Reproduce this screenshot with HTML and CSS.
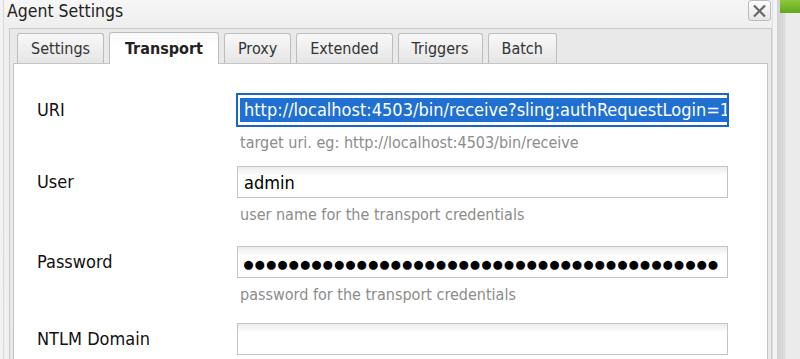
FILE: index.html
```html
<!DOCTYPE html>
<html lang="en">
<head>
    <meta charset="UTF-8">
    <title>Agent Settings</title>
    <link rel="stylesheet" href="styles.css">
</head>
<body>
    <div class="page">
        <div class="window">
            <div class="titlebar">
                <span class="title">Agent Settings</span>
                <div class="close">
                    <svg width="15" height="14" viewBox="0 0 15 14">
                        <path d="M2 1.5 L13 12.5 M13 1.5 L2 12.5" stroke="#666" stroke-width="2.2" fill="none"/>
                    </svg>
                </div>
            </div>
            <div class="panel">
                <div class="tabs">
                    <div class="tab">Settings</div>
                    <div class="tab active">Transport</div>
                    <div class="tab">Proxy</div>
                    <div class="tab">Extended</div>
                    <div class="tab">Triggers</div>
                    <div class="tab">Batch</div>
                </div>
                <div class="body">
                    <div class="row row-uri">
                        <div class="label">URI</div>
                        <div class="control">
                            <div class="field focus"><span class="sel">http://localhost:4503/bin/receive?sling:authRequestLogin=1</span></div>
                            <div class="hint">target uri. eg: http://localhost:4503/bin/receive</div>
                        </div>
                    </div>
                    <div class="row row-user">
                        <div class="label">User</div>
                        <div class="control">
                            <div class="field">admin</div>
                            <div class="hint">user name for the transport credentials</div>
                        </div>
                    </div>
                    <div class="row">
                        <div class="label">Password</div>
                        <div class="control">
                            <div class="field field-pass"><span class="dots">●●●●●●●●●●●●●●●●●●●●●●●●●●●●●●●●●●●●●●●●●●</span></div>
                            <div class="hint">password for the transport credentials</div>
                        </div>
                    </div>
                    <div class="row">
                        <div class="label">NTLM Domain</div>
                        <div class="control">
                            <div class="field"></div>
                        </div>
                    </div>
                </div>
            </div>
        </div>
        <div class="side">
            <div class="accent"></div>
        </div>
    </div>
</body>
</html>
```

FILE: styles.css
```css
body {
    margin: 0;
    padding: 0;
    font-family: "DejaVu Sans Condensed", "DejaVu Sans", sans-serif;
    font-stretch: condensed;
    background-color: #ececec;
    overflow: hidden;
}
.page {
    display: flex;
    height: 359px;
    padding-left: 3px;
    background: #f2f2f2;
}
.window {
    width: 775px;
    flex: none;
    box-sizing: border-box;
    display: flex;
    flex-direction: column;
    background: linear-gradient(#f6f6f6, #eeeeee 28px, #f0f0f0);
    border-left: 1px solid #d9d9d9;
    border-right: 1px solid #d2d2d2;
    box-shadow: inset -4px 0 0 #f3f3f3, inset -5px 0 0 #dedede;
}
.titlebar {
    flex: none;
    height: 28px;
    display: flex;
    align-items: flex-start;
    padding-left: 3px;
}
.title {
    font-size: 17.5px;
    line-height: 22px;
    color: #222;
}
.close {
    margin-left: auto;
    margin-right: 6px;
    width: 23px;
    height: 21px;
    box-sizing: border-box;
    border: 1px solid #bcbcbc;
    border-radius: 3px;
    background: linear-gradient(#fdfdfd, #e6e6e6);
    display: flex;
    align-items: center;
    justify-content: center;
}
.panel {
    flex: 1;
    min-height: 0;
    margin: 0 5px;
    padding: 0 3px;
    border: 1px solid #cacaca;
    border-bottom: none;
    background: #e9e9e9;
    display: flex;
    flex-direction: column;
    overflow: hidden;
}
.tabs {
    flex: none;
    display: flex;
    gap: 5px;
    padding: 4px 0 0 4px;
    height: 30px;
}
.tab {
    height: 30px;
    box-sizing: border-box;
    padding: 0 13px;
    border: 1px solid #bdbdbd;
    border-bottom: none;
    border-radius: 3px 3px 0 0;
    background: linear-gradient(#f8f8f8, #e5e5e5);
    font-size: 16px;
    line-height: 29px;
    color: #333;
}
.tab.active {
    height: 32px;
    margin-top: -1px;
    padding: 0 15px;
    background: linear-gradient(#f7f7f7, #ffffff 12px);
    font-weight: bold;
    color: #222;
    position: relative;
    z-index: 1;
    line-height: 31px;
}
.body {
    flex: 1;
    min-height: 0;
    background: #fff;
    border: 1px solid #c4c4c4;
    border-bottom: none;
    padding: 30px 0 0 23px;
    overflow: hidden;
}
.row {
    display: flex;
    margin-bottom: 17px;
}
.row-uri {
    margin-bottom: 12px;
}
.row-user {
    margin-bottom: 20px;
}
.label {
    width: 200px;
    flex: none;
    font-size: 18px;
    line-height: 32px;
    color: #111;
}
.control {
    width: 491px;
    flex: none;
}
.field {
    height: 32px;
    box-sizing: border-box;
    border: 1px solid #c3c3c3;
    background: linear-gradient(#ececec, #ffffff 9px);
    padding: 0 6px;
    font-size: 18px;
    line-height: 31px;
    color: #000;
    white-space: nowrap;
    overflow: hidden;
}
.field.focus {
    height: 34px;
    margin: -1px;
    border: 2px solid #1c64c8;
    background: #fff;
    padding: 0 2px;
    line-height: 28px;
}
.field-pass {
    padding: 0 3px 0 6px;
}
.sel {
    display: inline-block;
    background: #1f70d2;
    color: #fff;
    padding: 0 3px 0 4px;
    line-height: 24px;
    vertical-align: middle;
}
.dots {
    font-family: "DejaVu Sans Mono", monospace;
    font-size: 15px;
    letter-spacing: 2.3px;
}
.hint {
    margin-top: 6px;
    padding-left: 3px;
    font-size: 16px;
    line-height: 22px;
    color: #8c8c8c;
}
.side {
    flex: 1;
    background: linear-gradient(to right, #d3d3d3, #dcdcdc 7px, #ebebeb 8px);
}
.accent {
    height: 13px;
    margin-left: 2px;
    background: linear-gradient(#8cc83c, #64a51f);
}
```
